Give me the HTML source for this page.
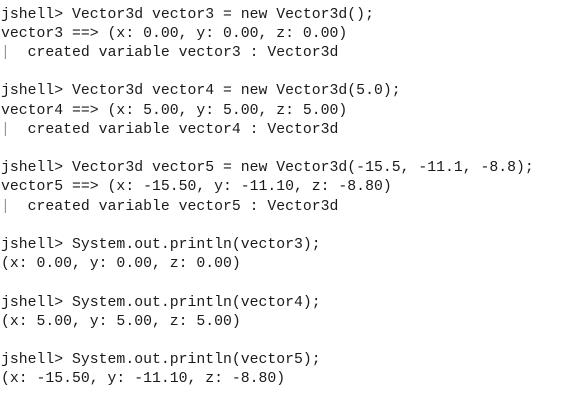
<!DOCTYPE html>
<html><head><meta charset="utf-8"><style>
html,body{margin:0;padding:0;background:#fff;width:566px;height:401px;overflow:hidden}
pre{margin:0;padding:5.5px 0 0 1px;font-family:"Liberation Mono",monospace;font-size:14.8px;line-height:19.2px;color:#1a1a1a}
.b{color:#999}
</style></head><body><pre>jshell&gt; Vector3d vector3 = new Vector3d();
vector3 ==&gt; (x: 0.00, y: 0.00, z: 0.00)
<span class="b">|</span>  created variable vector3 : Vector3d

jshell&gt; Vector3d vector4 = new Vector3d(5.0);
vector4 ==&gt; (x: 5.00, y: 5.00, z: 5.00)
<span class="b">|</span>  created variable vector4 : Vector3d

jshell&gt; Vector3d vector5 = new Vector3d(-15.5, -11.1, -8.8);
vector5 ==&gt; (x: -15.50, y: -11.10, z: -8.80)
<span class="b">|</span>  created variable vector5 : Vector3d

jshell&gt; System.out.println(vector3);
(x: 0.00, y: 0.00, z: 0.00)

jshell&gt; System.out.println(vector4);
(x: 5.00, y: 5.00, z: 5.00)

jshell&gt; System.out.println(vector5);
(x: -15.50, y: -11.10, z: -8.80)
</pre></body></html>
